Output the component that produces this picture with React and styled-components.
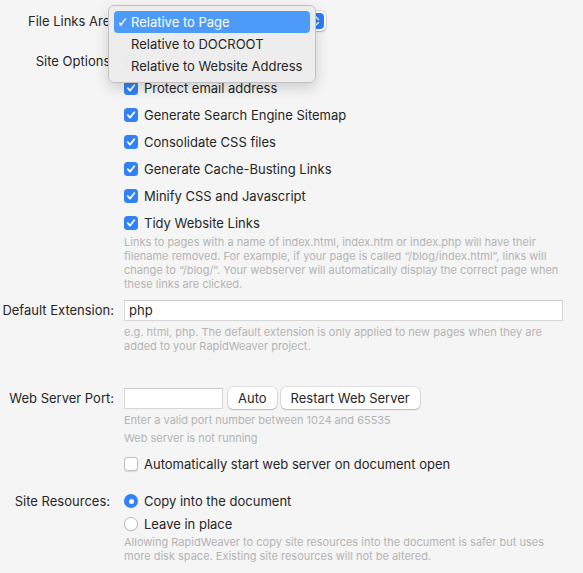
import React from "react";
import styled, { createGlobalStyle } from "styled-components";

const Global = createGlobalStyle`
  html, body { margin: 0; padding: 0; background: #f5f5f5; }
  body {
    font-family: Inter, "Noto Sans", sans-serif;
    font-size: 13px;
    color: #262626;
    -webkit-font-smoothing: antialiased;
  }
`;

const Page = styled.div`
  position: relative;
  width: 583px;
  height: 573px;
  overflow: hidden;
  padding-top: 10px;
  box-sizing: border-box;
`;

const Row = styled.div`
  display: flex;
  align-items: flex-start;
  margin-top: ${(p) => p.$mt || 0}px;
`;

const Label = styled.div`
  flex: none;
  width: ${(p) => 114 - (p.$inset || 0)}px;
  padding-right: ${(p) => 10 + (p.$inset || 0)}px;
  text-align: right;
  white-space: nowrap;
  line-height: ${(p) => p.$h || 18}px;
`;

const Content = styled.div`
  display: flex;
  flex-direction: column;
  width: 439px;
  gap: ${(p) => p.$gap || 0}px;
`;

const Inline = styled.div`
  display: flex;
  align-items: center;
  height: 22px;
`;

const CheckRow = styled.label`
  display: flex;
  align-items: center;
  height: 18px;
  gap: 6px;
  white-space: nowrap;
  margin-top: ${(p) => p.$mt || 0}px;
`;

const Box = styled.span`
  flex: none;
  width: 14px;
  height: 14px;
  box-sizing: border-box;
  border-radius: 3.5px;
  display: flex;
  align-items: center;
  justify-content: center;
  background: ${(p) => (p.$on ? "#3281f6" : "#ffffff")};
  border: ${(p) => (p.$on ? "none" : "0.5px solid #bdbdbd")};
  box-shadow: ${(p) => (p.$on ? "none" : "0 0.5px 1px rgba(0,0,0,0.12)")};
`;

const Radio = styled.span`
  flex: none;
  width: 14px;
  height: 14px;
  box-sizing: border-box;
  border-radius: 50%;
  display: flex;
  align-items: center;
  justify-content: center;
  background: ${(p) => (p.$on ? "#3281f6" : "#ffffff")};
  border: ${(p) => (p.$on ? "none" : "0.5px solid #bdbdbd")};
  box-shadow: ${(p) => (p.$on ? "none" : "0 0.5px 1px rgba(0,0,0,0.12)")};
  &::after {
    content: "";
    display: ${(p) => (p.$on ? "block" : "none")};
    width: 5px;
    height: 5px;
    border-radius: 50%;
    background: #fff;
  }
`;

const Help = styled.div`
  font-size: 11px;
  line-height: 14px;
  color: #b4b4b4;
  margin-top: ${(p) => p.$mt || 0}px;
`;

const TextField = styled.div`
  box-sizing: border-box;
  width: ${(p) => p.$w};
  height: 21px;
  background: #fff;
  border: 1px solid #d6d6d6;
  border-top-color: #c8c8c8;
  padding: 0 4px;
  line-height: 19px;
  color: #1f1f1f;
`;

const Button = styled.div`
  box-sizing: border-box;
  height: 22px;
  padding: 0 10px;
  margin-left: ${(p) => p.$ml || 0}px;
  background: #fff;
  border-radius: 5px;
  box-shadow: 0 0 0 0.5px rgba(0, 0, 0, 0.18), 0 1px 1.5px rgba(0, 0, 0, 0.18);
  line-height: 22px;
  white-space: nowrap;
`;

const PopButton = styled.div`
  position: relative;
  box-sizing: border-box;
  width: 202px;
  height: 20px;
  margin-top: 1px;
  background: #fff;
  border-radius: 5px;
  box-shadow: 0 0 0 0.5px rgba(0, 0, 0, 0.18), 0 1px 1.5px rgba(0, 0, 0, 0.18);
`;

const Stepper = styled.span`
  position: absolute;
  right: 2px;
  top: 2px;
  width: 16px;
  height: 16px;
  border-radius: 4px;
  background: #2f7df6;
  display: flex;
  align-items: center;
  justify-content: center;
`;

const Menu = styled.div`
  position: absolute;
  left: 108px;
  top: 5px;
  width: 208px;
  box-sizing: border-box;
  padding: 5px;
  background: rgba(237, 237, 237, 0.98);
  border: 0.5px solid #c2c2c2;
  border-radius: 6px;
  box-shadow: 0 5px 14px rgba(0, 0, 0, 0.16);
  z-index: 10;
`;

const MenuItem = styled.div`
  position: relative;
  height: 22px;
  line-height: 22px;
  padding-left: 17px;
  border-radius: 4px;
  white-space: nowrap;
  background: ${(p) => (p.$sel ? "#4c9bf9" : "transparent")};
  color: ${(p) => (p.$sel ? "#ffffff" : "#262626")};
`;

const Tick = styled.span`
  position: absolute;
  left: 3px;
  top: 0;
  font-size: 14px;
  font-weight: 700;
  font-family: "DejaVu Sans", sans-serif;
`;

const Check = () => (
  <svg width="10" height="10" viewBox="0 0 10 10">
    <path d="M1.8 5.2 L4 7.6 L8.3 2.3" fill="none" stroke="#fff" strokeWidth="1.8" strokeLinecap="round" strokeLinejoin="round" />
  </svg>
);

const Chevrons = () => (
  <svg width="8" height="12" viewBox="0 0 8 12">
    <path d="M1.5 4.5 L4 2 L6.5 4.5 M1.5 7.5 L4 10 L6.5 7.5" fill="none" stroke="#fff" strokeWidth="1.4" strokeLinecap="round" strokeLinejoin="round" />
  </svg>
);

const CheckItem = ({ on = true, children, mt }) => (
  <CheckRow $mt={mt}>
    <Box $on={on}>{on && <Check />}</Box>
    {children}
  </CheckRow>
);

const RadioItem = ({ on, children }) => (
  <CheckRow>
    <Radio $on={on} />
    {children}
  </CheckRow>
);

const siteOptions = [
  "",
  "Protect email address",
  "Generate Search Engine Sitemap",
  "Consolidate CSS files",
  "Generate Cache-Busting Links",
  "Minify CSS and Javascript",
  "Tidy Website Links",
];

export default function App() {
  return (
    <Page>
      <Global />
      <Row>
        <Label $h={22}>File Links Are:</Label>
        <Content>
          <PopButton>
            <Stepper>
              <Chevrons />
            </Stepper>
          </PopButton>
        </Content>
      </Row>

      <Row $mt={20}>
        <Label>Site Options:</Label>
        <Content>
          <Content $gap={9}>
            {siteOptions.map((t, i) => (
              <CheckItem key={i}>{t}</CheckItem>
            ))}
          </Content>
          <Help $mt={3}>
            Links to pages with a name of index.html, index.htm or index.php will have their
            filename removed. For example, if your page is called “/blog/index.html”, links will
            change to “/blog/”. Your webserver will automatically display the correct page when
            these links are clicked.
          </Help>
        </Content>
      </Row>

      <Row $mt={9}>
        <Label $h={21}>Default Extension:</Label>
        <Content>
          <TextField $w="439px">php</TextField>
          <Help $mt={4}>
            e.g. html, php. The default extension is only applied to new pages when they are
            added to your RapidWeaver project.
          </Help>
        </Content>
      </Row>

      <Row $mt={34}>
        <Label $h={22}>Web Server Port:</Label>
        <Content>
          <Inline>
            <TextField $w="99px" />
            <Button $ml={5}>Auto</Button>
            <Button $ml={4}>Restart Web Server</Button>
          </Inline>
          <Help $mt={4}>Enter a valid port number between 1024 and 65535</Help>
          <Help $mt={4}>Web server is not running</Help>
          <CheckItem on={false} mt={10}>
            Automatically start web server on document open
          </CheckItem>
        </Content>
      </Row>

      <Row $mt={19}>
        <Label $inset={4}>Site Resources:</Label>
        <Content $gap={5}>
          <RadioItem on>Copy into the document</RadioItem>
          <RadioItem>Leave in place</RadioItem>
          <Help $mt={-3}>
            Allowing RapidWeaver to copy site resources into the document is safer but uses
            more disk space. Existing site resources will not be altered.
          </Help>
        </Content>
      </Row>

      <Menu>
        <MenuItem $sel>
          <Tick>✓</Tick>
          Relative to Page
        </MenuItem>
        <MenuItem>Relative to DOCROOT</MenuItem>
        <MenuItem>Relative to Website Address</MenuItem>
      </Menu>
    </Page>
  );
}
